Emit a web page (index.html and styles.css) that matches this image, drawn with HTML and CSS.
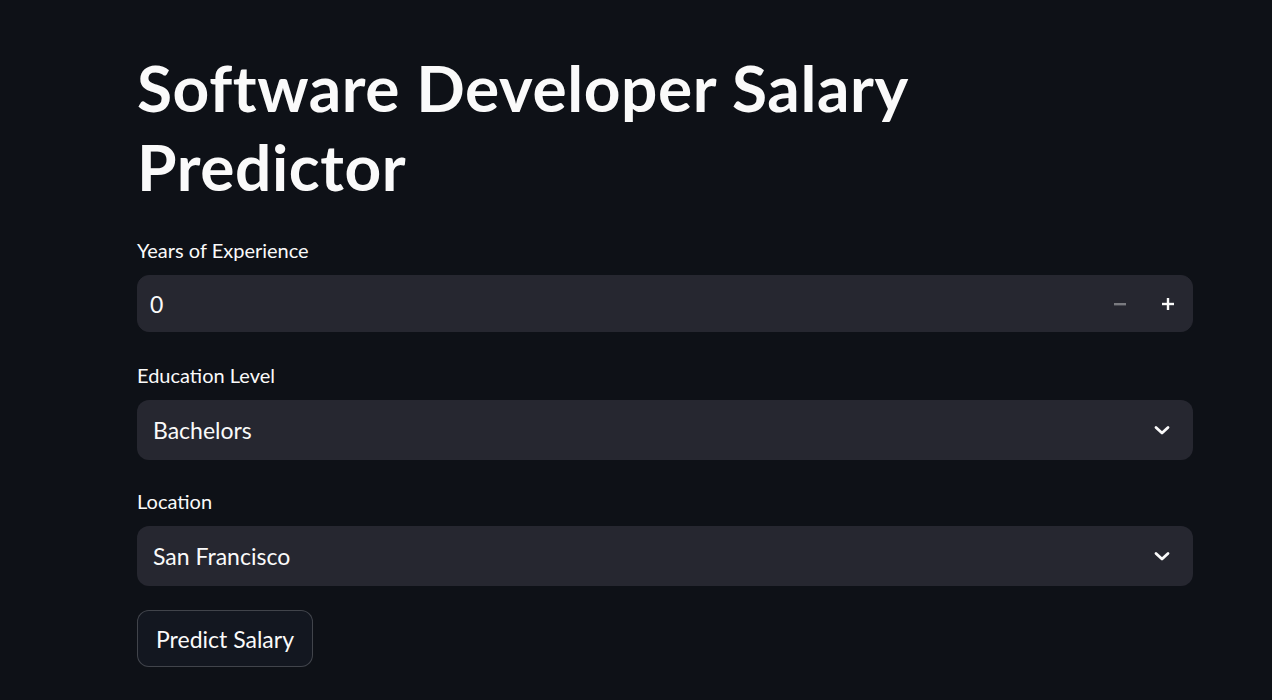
FILE: index.html
```html
<!DOCTYPE html>
<html>
<head>
<meta charset="utf-8">
<link rel="stylesheet" href="styles.css">
</head>
<body>
<main class="block">
  <h1 class="title">Software Developer Salary<br>Predictor</h1>

  <div class="field field-number">
    <label class="label">Years of Experience</label>
    <div class="number">
      <span class="number-value">0</span>
      <div class="steps">
        <button class="step step-disabled" aria-label="minus">
          <svg width="14" height="14" viewBox="0 0 14 14"><rect x="1" y="6" width="12" height="2.4" fill="currentColor"/></svg>
        </button>
        <button class="step" aria-label="plus">
          <svg width="14" height="14" viewBox="0 0 14 14"><rect x="1" y="5.8" width="12" height="2.4" fill="currentColor"/><rect x="5.8" y="1" width="2.4" height="12" fill="currentColor"/></svg>
        </button>
      </div>
    </div>
  </div>

  <div class="field">
    <label class="label">Education Level</label>
    <div class="select">
      <span class="select-value">Bachelors</span>
      <svg class="chev" width="18" height="18" viewBox="0 0 18 18"><path d="M3 6.5 L9 12 L15 6.5" fill="none" stroke="currentColor" stroke-width="2.8" stroke-linecap="round" stroke-linejoin="round"/></svg>
    </div>
  </div>

  <div class="field field-last">
    <label class="label">Location</label>
    <div class="select">
      <span class="select-value">San Francisco</span>
      <svg class="chev" width="18" height="18" viewBox="0 0 18 18"><path d="M3 6.5 L9 12 L15 6.5" fill="none" stroke="currentColor" stroke-width="2.8" stroke-linecap="round" stroke-linejoin="round"/></svg>
    </div>
  </div>

  <button class="btn">Predict Salary</button>
</main>
</body>
</html>
```

FILE: styles.css
```css
* { box-sizing: border-box; }
html, body {
  margin: 0;
  background: #0e1117;
  color: #fafafa;
  font-family: "Lato", "Noto Sans", sans-serif;
}
.block {
  width: 1056px;
  margin-left: 137px;
  padding-top: 48px;
  display: flex;
  flex-direction: column;
}
.title {
  margin: 0 0 30px 0;
  font-size: 64px;
  font-weight: 700;
  line-height: 79px;
  letter-spacing: 0.6px;
}
.field {
  display: flex;
  flex-direction: column;
  margin-bottom: 27px;
}
.field-number { margin-bottom: 29px; }
.field-last { margin-bottom: 24px; }
.label {
  font-size: 20px;
  line-height: 28px;
  margin-bottom: 11px;
}
.number {
  height: 57px;
  background: #262730;
  border: 1px solid #262730;
  border-radius: 12px;
  display: flex;
  align-items: center;
  padding-left: 12px;
}
.number-value {
  flex: 1;
  font-size: 23px;
}
.steps {
  display: flex;
  height: 100%;
}
.step {
  width: 48px;
  border: none;
  background: transparent;
  color: #fafafa;
  display: flex;
  align-items: center;
  justify-content: center;
  padding: 0;
}
.step-disabled { color: rgba(250,250,250,0.4); }
.select {
  height: 60px;
  background: #262730;
  border-radius: 12px;
  display: flex;
  align-items: center;
  padding: 0 22px 0 16px;
}
.select-value {
  flex: 1;
  font-size: 23px;
}
.chev { color: #fafafa; }
.btn {
  align-self: flex-start;
  height: 57px;
  padding: 0 18px;
  background: #131720;
  border: 1px solid rgba(250,250,250,0.2);
  border-radius: 12px;
  color: #fafafa;
  font-family: inherit;
  font-size: 23px;
}
```
